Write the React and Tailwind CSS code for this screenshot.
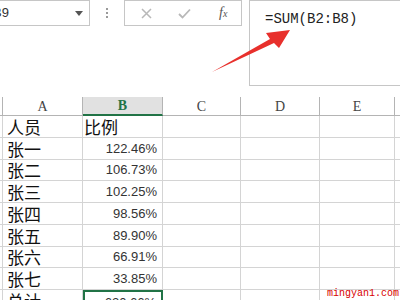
import React from "react";

const rows = [
  ["人员", "比例", true],
  ["张一", "122.46%"],
  ["张二", "106.73%"],
  ["张三", "102.25%"],
  ["张四", "98.56%"],
  ["张五", "89.90%"],
  ["张六", "66.91%"],
  ["张七", "33.85%"],
];

const cjk = { fontFamily: '"Noto Sans CJK SC", "Noto Sans", sans-serif' };

function Cell({ children, className = "" }) {
  return (
    <div className={`h-[21.75px] border-r border-b border-[#d4d4d4] ${className}`}>
      {children}
    </div>
  );
}

export default function App() {
  return (
    <div className="relative w-[400px] h-[300px] overflow-hidden bg-white">
      {/* Toolbar / formula bar */}
      <div className="flex h-[97px] items-start">
        <div className="relative ml-[-11px] w-[101px] h-[26px] shrink-0 border border-[#c6c6c6] bg-white flex items-center">
          <span className="ml-[3px] text-[13px] text-[#333] font-['Liberation_Sans',sans-serif]">B9</span>
          <svg className="absolute left-[85px] top-[10px]" width="8" height="5" viewBox="0 0 8 5">
            <path d="M0 0 L8 0 L4 5 Z" fill="#555" />
          </svg>
        </div>
        <div className="w-[34px] h-[26px] shrink-0 flex flex-col items-center justify-center gap-[2px]">
          <span className="w-[2px] h-[2px] bg-[#9a9a9a]" />
          <span className="w-[2px] h-[2px] bg-[#9a9a9a]" />
          <span className="w-[2px] h-[2px] bg-[#9a9a9a]" />
        </div>
        <div className="w-[118px] h-[26px] shrink-0 border border-[#c6c6c6] flex items-center">
          <svg className="ml-[16px]" width="11" height="11" viewBox="0 0 11 11">
            <path d="M1 1 L10 10 M10 1 L1 10" stroke="#b8b8b8" strokeWidth="1.5" />
          </svg>
          <svg className="ml-[26px]" width="13" height="11" viewBox="0 0 13 11">
            <path d="M1 6 L4.5 9.5 L12 1.5" stroke="#b8b8b8" strokeWidth="1.8" fill="none" />
          </svg>
          <span className="ml-[28px] text-[14px] italic text-[#555] font-['Liberation_Serif',serif] leading-none">
            f<span className="text-[10px]">x</span>
          </span>
        </div>
        <div className="ml-[7px] mr-[-10px] flex-1 h-[86px] border border-[#c6c6c6] pl-[15px] pt-[4px]">
          <span className="text-[14px] text-[#222] font-['Liberation_Mono',monospace]">=SUM(B2:B8)</span>
        </div>
      </div>

      {/* Sheet */}
      <div className="grid grid-cols-[3px_80px_80px_78px_79px_75px_1fr]">
        {/* header row */}
        <div className="h-[19px] border-r border-b border-[#b4b4b4]" />
        <div className="h-[19px] border-r border-b border-[#b4b4b4] flex items-center justify-center text-[14px] text-[#444] font-['Liberation_Serif',serif]">A</div>
        <div className="h-[19px] border-r border-[#b4b4b4] border-b-2 border-b-[#217346] bg-[#e1e1e1] flex items-center justify-center text-[14px] font-bold text-[#217346] font-['Liberation_Serif',serif]">B</div>
        <div className="h-[19px] border-r border-b border-[#b4b4b4] flex items-center justify-center text-[14px] text-[#444] font-['Liberation_Serif',serif]">C</div>
        <div className="h-[19px] border-r border-b border-[#b4b4b4] flex items-center justify-center text-[14px] text-[#444] font-['Liberation_Serif',serif]">D</div>
        <div className="h-[19px] border-r border-b border-[#b4b4b4] flex items-center justify-center text-[14px] text-[#444] font-['Liberation_Serif',serif]">E</div>
        <div className="h-[19px] border-b border-[#b4b4b4]" />

        {rows.map(([name, val, head]) => (
          <React.Fragment key={name}>
            <Cell />
            <Cell className="pl-[4px] flex items-center text-[17px] leading-none text-[#111]">
              <span style={cjk}>{name}</span>
            </Cell>
            <Cell
              className={
                head
                  ? "pl-[1px] flex items-center text-[17px] leading-none text-[#111]"
                  : "pr-[5px] flex items-center justify-end text-[13px] leading-none text-[#333] font-['Liberation_Sans',sans-serif]"
              }
            >
              {head ? <span style={cjk}>{val}</span> : val}
            </Cell>
            <Cell />
            <Cell />
            <Cell />
            <div className="h-[21.75px] border-b border-[#d4d4d4]" />
          </React.Fragment>
        ))}

        {/* total row */}
        <Cell />
        <Cell className="pl-[4px] pt-[2px] flex items-start text-[17px] leading-none text-[#111]">
          <span style={cjk}>总计</span>
        </Cell>
        <div className="h-[21.75px] border-2 border-[#217346] pr-[5px] pt-[4px] flex items-start justify-end text-[13px] leading-none text-[#333] font-['Liberation_Sans',sans-serif]">
          620.66%
        </div>
        <Cell />
        <Cell />
        <Cell />
        <div className="h-[21.75px] border-b border-[#d4d4d4]" />
      </div>

      {/* red arrow */}
      <svg className="absolute left-0 top-0 pointer-events-none" width="400" height="300" viewBox="0 0 400 300">
        <polygon points="212,72 270,39 266,33 290,30 279,48 274,43" fill="#e8302c" />
      </svg>

      <span className="absolute right-[1px] bottom-[1px] text-[10px] leading-none text-[#d80000] font-['Liberation_Mono',monospace]">
        mingyan1.com
      </span>
    </div>
  );
}
